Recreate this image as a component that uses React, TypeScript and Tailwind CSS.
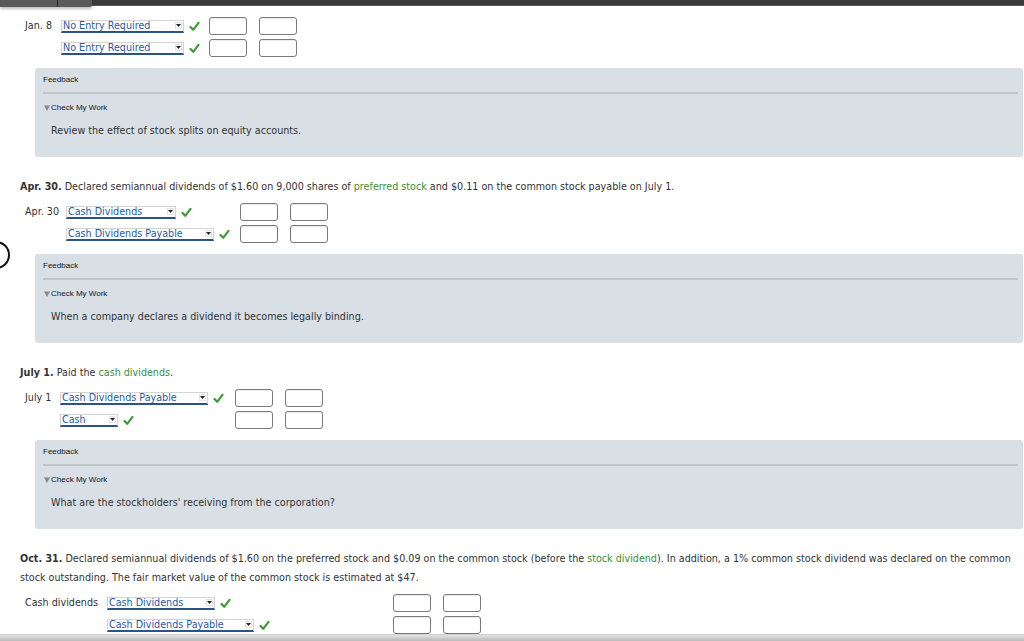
import React from 'react'

type Line = { account: string; selectW: number }

interface EntryProps {
  label: string
  labelW: number
  accountW: number
  lines: Line[]
}

function Check() {
  return (
    <svg width="11" height="11" viewBox="0 0 11 11" className="shrink-0">
      <path d="M1.5 6 L4.2 8.8 L9.5 1.8" fill="none" stroke="#3f9a35" strokeWidth="2.2" strokeLinecap="round" strokeLinejoin="round" />
    </svg>
  )
}

function AccountSelect({ account, width }: { account: string; width: number }) {
  return (
    <div
      className="flex items-center h-[13px] border border-[#d4d4d4] border-b-2 border-b-[#2d5286] bg-white pl-[1px] pr-[1px]"
      style={{ width }}
    >
      <span className="flex-1 text-[#1f5ca8] leading-[11px] whitespace-nowrap overflow-hidden">{account}</span>
      <span className="flex items-center justify-center w-[7px] h-[7px] border border-[#e2e2e2]">
        <svg width="5" height="3" viewBox="0 0 5 3">
          <path d="M0 0 H5 L2.5 3 Z" fill="#222" />
        </svg>
      </span>
    </div>
  )
}

function AmountBox() {
  return <div className="w-[38px] h-[18px] rounded-[3px] border border-[#7a7a7a] bg-white shadow-[inset_0_1px_1px_rgba(0,0,0,0.08)]" />
}

function Entry({ label, labelW, accountW, lines }: EntryProps) {
  return (
    <div className="flex flex-col gap-[4px]">
      {lines.map((line, i) => (
        <div key={i} className="flex items-center h-[18px]">
          <div className="pl-[25px] text-[#333] whitespace-nowrap" style={{ width: labelW }}>
            {i === 0 ? label : ''}
          </div>
          <div className="flex items-center gap-[5px]" style={{ width: accountW }}>
            <AccountSelect account={line.account} width={line.selectW} />
            <Check />
          </div>
          <div className="flex gap-[12px]">
            <AmountBox />
            <AmountBox />
          </div>
        </div>
      ))}
    </div>
  )
}

function Feedback({ text }: { text: string }) {
  return (
    <div className="mt-[11px] ml-[35px] mr-[1px] rounded-[3px] bg-[#d8dfe5] pt-[6px] pb-[19px] pl-[8px] pr-[5px]">
      <div className="h-[12px] leading-[12px] text-[8px] text-[#151515] font-['Liberation_Sans',Arial,sans-serif]">Feedback</div>
      <div className="mt-[6px] h-[2px] bg-[#bfc6c9]" />
      <div className="mt-[8px] h-[12px] leading-[12px] flex items-center gap-[1px] text-[8px] text-[#151515] font-['Liberation_Sans',Arial,sans-serif]">
        <svg width="6" height="6" viewBox="0 0 6 6" className="ml-[1px]">
          <path d="M0 0.5 H6 L3 6 Z" fill="#8a8a8a" />
        </svg>
        <span>Check My Work</span>
      </div>
      <div className="mt-[10px] h-[14px] leading-[14px] pl-[8px] text-[#333]">{text}</div>
    </div>
  )
}

function Heading({ children }: { children: React.ReactNode }) {
  return <p className="mt-[20px] mb-[7px] pl-[20px] pr-[8px] leading-[19px] text-[#333]">{children}</p>
}

const Link = ({ children }: { children: React.ReactNode }) => <span className="text-[#3e8d38]">{children}</span>

export default function App() {
  return (
    <div className="relative h-[641px] w-[1024px] overflow-hidden bg-white text-[9.6px] font-['DejaVu_Sans',Verdana,sans-serif]">
      {/* top toolbar */}
      <div className="absolute left-0 top-0 flex h-[6px] w-full bg-[#3b3b3b] border-b border-[#555]">
        <div className="flex h-[7px] w-[92px] bg-[#5a5a5a] shadow-[0_2px_3px_rgba(0,0,0,0.25)] rounded-br-[2px]">
          <div className="w-[58px] border-r border-[#2a2a2a]" />
        </div>
      </div>

      {/* stray radio circle on the left edge */}
      <div className="absolute left-[-18px] top-[241px] w-[28px] h-[28px] rounded-full border-2 border-[#111]" />

      <div className="pt-[17px]">
        <Entry
          label="Jan. 8"
          labelW={61}
          accountW={148}
          lines={[
            { account: 'No Entry Required', selectW: 123 },
            { account: 'No Entry Required', selectW: 123 },
          ]}
        />
        <Feedback text="Review the effect of stock splits on equity accounts." />

        <Heading>
          <b>Apr. 30.</b> Declared semiannual dividends of $1.60 on 9,000 shares of <Link>preferred stock</Link> and $0.11 on the common stock payable on July 1.
        </Heading>
        <Entry
          label="Apr. 30"
          labelW={66}
          accountW={174}
          lines={[
            { account: 'Cash Dividends', selectW: 110 },
            { account: 'Cash Dividends Payable', selectW: 148 },
          ]}
        />
        <Feedback text="When a company declares a dividend it becomes legally binding." />

        <Heading>
          <b>July 1.</b> Paid the <Link>cash dividends</Link>.
        </Heading>
        <Entry
          label="July 1"
          labelW={60}
          accountW={175}
          lines={[
            { account: 'Cash Dividends Payable', selectW: 148 },
            { account: 'Cash', selectW: 58 },
          ]}
        />
        <Feedback text="What are the stockholders' receiving from the corporation?" />

        <Heading>
          <b>Oct. 31.</b> Declared semiannual dividends of $1.60 on the preferred stock and $0.09 on the common stock (before the <Link>stock dividend</Link>). In addition, a 1% common stock dividend was declared on the common stock outstanding. The fair market value of the common stock is estimated at $47.
        </Heading>
        <Entry
          label="Cash dividends"
          labelW={107}
          accountW={286}
          lines={[
            { account: 'Cash Dividends', selectW: 108 },
            { account: 'Cash Dividends Payable', selectW: 147 },
          ]}
        />
      </div>

      {/* bottom bar */}
      <div className="absolute bottom-0 left-0 h-[7px] w-full bg-gradient-to-b from-[#e4e4e4] to-[#b9b9b9] border-t border-[#d0d0d0]" />
    </div>
  )
}
